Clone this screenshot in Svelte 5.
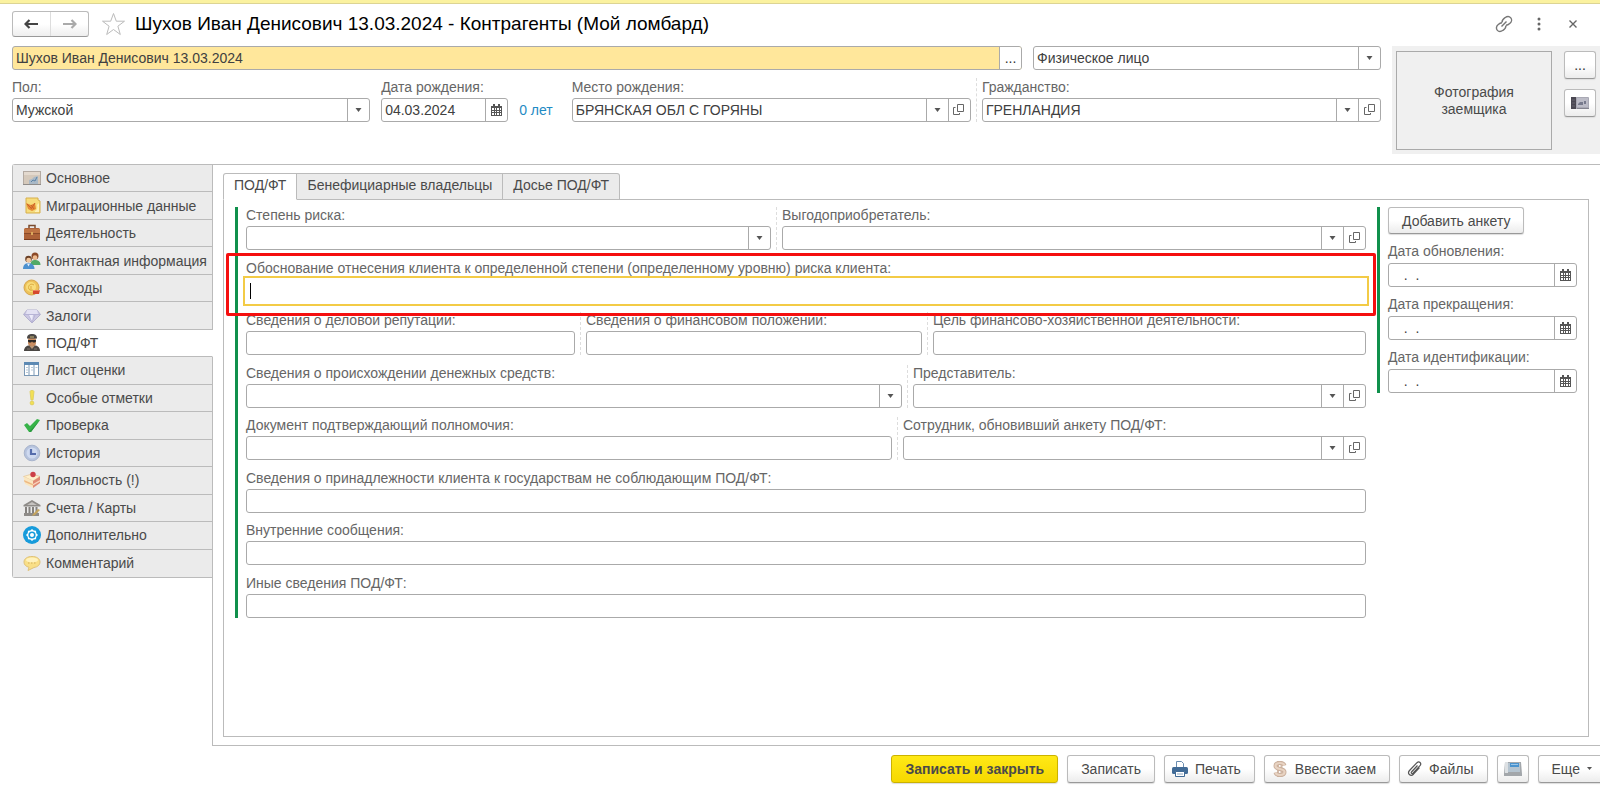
<script>
    const sections = [
        { id: "main", title: "Основное" },
        { id: "migration", title: "Миграционные данные" },
        { id: "work", title: "Деятельность" },
        { id: "contacts", title: "Контактная информация" },
        { id: "expenses", title: "Расходы" },
        { id: "pledges", title: "Залоги" },
        { id: "podft", title: "ПОД/ФТ" },
        { id: "score", title: "Лист оценки" },
        { id: "notes", title: "Особые отметки" },
        { id: "check", title: "Проверка" },
        { id: "history", title: "История" },
        { id: "loyalty", title: "Лояльность (!)" },
        { id: "accounts", title: "Счета / Карты" },
        { id: "extra", title: "Дополнительно" },
        { id: "comment", title: "Комментарий" },
    ];

    const tabs = ["ПОД/ФТ", "Бенефициарные владельцы", "Досье ПОД/ФТ"];

    // share is the relative width of a field inside its row
    const rows = [
        [
            { id: "risk", label: "Степень риска:", kind: "select", share: 525 },
            { id: "beneficiary", label: "Выгодоприобретатель:", kind: "ref", share: 584 },
        ],
        [
            {
                id: "reason",
                label: "Обоснование отнесения клиента к определенной степени (определенному уровню) риска клиента:",
                kind: "focus",
                share: 1,
            },
        ],
        [
            { id: "reputation", label: "Сведения о деловой репутации:", kind: "text", share: 329 },
            { id: "finance", label: "Сведения о финансовом положении:", kind: "text", share: 336 },
            { id: "purpose", label: "Цель финансово-хозяйственной деятельности:", kind: "text", share: 433 },
        ],
        [
            { id: "origin", label: "Сведения о происхождении денежных средств:", kind: "select", share: 656 },
            { id: "agent", label: "Представитель:", kind: "ref", share: 453 },
        ],
        [
            { id: "document", label: "Документ подтверждающий полномочия:", kind: "text", share: 646 },
            { id: "employee", label: "Сотрудник, обновивший анкету ПОД/ФТ:", kind: "ref", share: 463 },
        ],
        [
            {
                id: "states",
                label: "Сведения о принадлежности клиента к государствам не соблюдающим ПОД/ФТ:",
                kind: "text",
                share: 1,
            },
        ],
        [{ id: "messages", label: "Внутренние сообщения:", kind: "text", share: 1 }],
        [{ id: "other", label: "Иные сведения ПОД/ФТ:", kind: "text", share: 1 }],
    ];

    const dates = [
        { id: "updated", label: "Дата обновления:" },
        { id: "stopped", label: "Дата прекращения:" },
        { id: "identified", label: "Дата идентификации:" },
    ];

    let section = $state("podft");
    let tab = $state("ПОД/ФТ");
</script>

{#snippet arrow()}
    <svg width="7" height="4" viewBox="0 0 7 4"><path d="M0.5 0h6L3.5 4z" fill="#555" /></svg>
{/snippet}

{#snippet openIcon()}
    <svg width="12" height="12" viewBox="0 0 12 12" fill="none" stroke="#666">
        <path d="M4.5 0.5h6v7h-6z" />
        <path d="M2.5 3.5h-2v7h6v-1.500" />
    </svg>
{/snippet}

{#snippet calendar()}
    <svg width="11" height="12" viewBox="0 0 11 12">
        <path d="M0 2h11v10H0z" fill="#555" />
        <path d="M2 0h2v3H2zM7 0h2v3H7z" fill="#555" />
        <path
            d="M1 4h2v2H1zM4 4h1v2H4zM6 4h2v2H6zM9 4h1v2H9zM1 7h2v1H1zM4 7h1v1H4zM6 7h2v1H6zM9 7h1v1H9zM1 9h2v2H1zM4 9h1v2H4zM6 9h2v2H6zM9 9h1v2H9z"
            fill="#fff"
        />
    </svg>
{/snippet}

{#snippet control(id, kind, value)}
    <div class="box {kind}">
        {#if kind === "select"}
            <select {id}>
                <option>{value}</option>
            </select>
            <span class="part">{@render arrow()}</span>
        {:else}
            <input {id} type="text" {value} />
        {/if}
        {#if kind === "ref"}
            <button type="button" class="part" aria-label="Выбрать">{@render arrow()}</button>
            <button type="button" class="part" aria-label="Открыть">{@render openIcon()}</button>
        {:else if kind === "date"}
            <button type="button" class="part" aria-label="Календарь">{@render calendar()}</button>
        {:else if kind === "focus"}
            <span class="caret"></span>
        {/if}
    </div>
{/snippet}

{#snippet deviceIcon()}
    <svg width="18" height="14" viewBox="0 0 18 14">
        <rect x="0" y="1" width="18" height="12" rx="1" fill="#a9a9b4" />
        <rect x="0" y="1" width="5" height="12" fill="#4a4852" />
        <path d="M1 4h3M1 7h3M1 10h3" stroke="#66636e" />
        <rect x="6" y="2" width="11" height="9" fill="#bcbcc7" />
        <path d="M7 8l2-2h3v3H7zM13 5h2v3h-2z" fill="#777a8c" />
        <path d="M6 12.500h12" stroke="#84848f" />
    </svg>
{/snippet}

{#snippet sectionIcon(id)}
    <svg width="18" height="18" viewBox="0 0 18 18">
        {#if id === "main"}
            <rect x="0.500" y="2.500" width="17" height="13" fill="#d5c9bb" stroke="#b3aaa2" />
            <path d="M1 3h16v3H1z" fill="#e3d9ce" />
            <path d="M6 15v-4l3-1 2-2 4-1v8z" fill="#a9b9c7" />
            <path d="M8 13l2-2 2 1 2-4" stroke="#5c83a6" fill="none" />
            <path d="M0 15.500h18" stroke="#8f8c8a" />
        {:else if id === "migration"}
            <path d="M3 1h12v2l2 1v12H3z" fill="#f7dd7c" stroke="#d6af4c" />
            <path d="M3 6l5 2 4-2 1 6-4 2-4-2z" fill="#e58b34" />
            <path d="M4 7l4 4M8 8l3 4M12 6l-4 6" stroke="#c9602b" fill="none" />
            <path d="M12 14c2-1 3-3 2-6l2-2v9h-4z" fill="#fff0b5" />
        {:else if id === "work"}
            <path d="M6 4V1.500h6V4" fill="none" stroke="#7b4b2e" stroke-width="1.500" />
            <rect x="1" y="4" width="16" height="12" rx="1.500" fill="#ad6238" />
            <path d="M1 5h16v4.500H1z" fill="#bf7443" />
            <path d="M1 9.500h16" stroke="#8a4a29" />
            <path d="M8 8h2v3H8z" fill="#dca95c" />
            <path d="M1 15h16v1H1z" fill="#7a3d20" />
        {:else if id === "contacts"}
            <circle cx="12" cy="4" r="3.500" fill="#8b4a28" />
            <circle cx="12" cy="5.500" r="2.300" fill="#efbd91" />
            <path d="M7.500 13c0-4 2-5 4.500-5s5.500 1 5.500 5z" fill="#52aa66" />
            <circle cx="5.500" cy="7" r="3.300" fill="#6b4026" />
            <circle cx="5.700" cy="8.200" r="2.400" fill="#f2c69c" />
            <path d="M0 17c0-4 2.500-6 5.500-6s6 2 6 6z" fill="#4d91cf" />
            <path d="M4 11.500l1.500 3 1.500-3z" fill="#e7f0fa" />
        {:else if id === "expenses"}
            <circle cx="8.500" cy="8.500" r="7.500" fill="#edc25a" stroke="#d6a54a" />
            <circle cx="8" cy="8" r="5" fill="#f8dc7b" />
            <path d="M11 6C8 4 5.500 6 5.500 8.500S8 12 10 11M8 7v4" stroke="#dcab40" fill="none" />
            <path d="M10 11h7l-1 4h-6z" fill="#d5482f" />
            <path d="M10 11h7v1h-7z" fill="#ec8062" />
        {:else if id === "pledges"}
            <path d="M4 3h10l3.500 4.500L9 16 0.500 7.500z" fill="#cbc7e2" stroke="#b3b0cf" />
            <path d="M4 3h10l1 4H3z" fill="#e3e1f3" />
            <path d="M1 7.500h16M6 8l3 7 3-7" fill="none" stroke="#b7b4d6" />
            <path d="M6 8h4l-1 6z" fill="#edecfa" />
        {:else if id === "podft"}
            <path d="M1 17c0-4 3-6 8-6s8 2 8 6z" fill="#4a4643" />
            <rect x="5" y="3" width="8" height="9" rx="3" fill="#c98e62" />
            <path d="M4 4.500C4 1 6 0 9 0s5 1 5 4.500z" fill="#4a4745" />
            <path d="M5 6h8v1.500l-1 1h-2L9 7.500l-1 1H6l-1-1z" fill="#2b2826" />
            <path d="M7 3h4" stroke="#c8b675" />
            <path d="M6.500 12L9 15l2.500-3" fill="#b99778" />
            <path d="M4 15h3M11 15h3" stroke="#7b746c" />
        {:else if id === "score"}
            <rect x="1.500" y="1.500" width="14" height="13" fill="#fff" stroke="#7a98b5" />
            <path d="M1 1h15v3H1z" fill="#5d89b3" />
            <path d="M6 4v11M11 4v11" stroke="#7a98b5" />
            <path d="M3 6.500h2M3 9h2M3 11.500h2M8 6.500h2M8 9h2M12.500 6.500h2" stroke="#b9c9d8" />
        {:else if id === "notes"}
            <path d="M7 2.500C7 1 11 1 11 2.500L10 11H8z" fill="#f2e055" stroke="#dccb5a" stroke-width=".8" />
            <circle cx="9" cy="14" r="1.900" fill="#f2e055" stroke="#dccb5a" stroke-width=".8" />
        {:else if id === "check"}
            <path d="M1 9l3-2 3 3 7-7 3 1-9 12H6z" fill="#37b349" />
            <path d="M6 16l1.500-2L17 4l-9 12z" fill="#2b9a3f" />
        {:else if id === "history"}
            <circle cx="9" cy="9" r="7.800" fill="#b6c3dd" stroke="#a9b5cd" />
            <circle cx="9" cy="9" r="5.500" fill="#cfdaf0" />
            <path d="M8 5v5h5" fill="none" stroke="#566dac" stroke-width="2.200" />
        {:else if id === "loyalty"}
            <path d="M0.500 5.500L9 3l8 2.500L10 10z" fill="#fff0cb" stroke="#e2c192" stroke-width=".7" />
            <path d="M0.500 5.500L10 10v7L2 13z" fill="#fae6c0" />
            <path d="M10 10l7-4.500V12l-7 5z" fill="#e08a74" />
            <path d="M1 9l9 4v1.500L1.500 11z" fill="#eeb983" />
            <path d="M10 13l7-4v1.500l-7 4z" fill="#f9d5bd" />
            <circle cx="10" cy="3.500" r="2.700" fill="#cc3f47" />
        {:else if id === "accounts"}
            <path d="M0.500 6L9 1l8.500 5v1.500h-17z" fill="#8e8b88" />
            <path d="M4 6l5-3 5 3z" fill="#c5c2bf" />
            <path d="M1 14h15v3H1z" fill="#8e8b88" />
            <path d="M3 8v6M6.500 8v6M10 8v6M13.500 8v6" stroke="#84817e" stroke-width="2" />
            <path d="M10 15l5-5 2 1-5 5-3 1z" fill="#c5a45c" />
        {:else if id === "extra"}
            <circle cx="9" cy="9" r="9" fill="#179bdb" />
            <path d="M9 3l1.700 1.500L13 4.700l.3 2.500L15 9l-1.700 1.800-.3 2.500-2.300.2L9 15l-1.700-1.500-2.300-.2-.3-2.500L3 9l1.700-1.800.3-2.500 2.300-.2z" fill="#fff" />
            <circle cx="9" cy="9" r="3.600" fill="#179bdb" />
            <circle cx="9" cy="9" r="2" fill="#fff" />
        {:else}
            <path
                d="M9 2.500c4.500 0 8 2 8 5.500 0 3-2.500 5-6 5.500L5 16.500l1-3.200C3 12.500 1 10.800 1 8c0-3.500 3.500-5.500 8-5.500z"
                fill="#f9df87"
                stroke="#dfc27a"
            />
            <ellipse cx="9" cy="6" rx="6" ry="2.500" fill="#fff2bd" />
            <path d="M5 9h1.500M8 9h1.500M11 9h1.500" stroke="#d3ae58" />
        {/if}
    </svg>
{/snippet}

<div class="window">
    <header class="title-bar">
        <div class="nav-buttons">
            <button aria-label="Назад">
                <svg width="15" height="10" viewBox="0 0 15 10"><path d="M14 5H2M5.500 1L1.500 5l4 4" fill="none" stroke="#444" stroke-width="2.200" /></svg>
            </button>
            <button aria-label="Вперед">
                <svg width="15" height="10" viewBox="0 0 15 10"><path d="M1 5h12M9.500 1l4 4-4 4" fill="none" stroke="#aaa" stroke-width="2.200" /></svg>
            </button>
        </div>
        <button class="plain" aria-label="В избранное">
            <svg width="25" height="24" viewBox="0 0 25 24">
                <path d="M12.500 1.500l2.800 7.700h8.200l-6.600 5 2.400 8.300-6.800-5-6.800 5 2.400-8.300-6.600-5h8.200z" fill="#fff" stroke="#bbb" />
            </svg>
        </button>
        <h1>Шухов Иван Денисович 13.03.2024 - Контрагенты (Мой ломбард)</h1>
        <div class="window-tools">
            <button class="plain" aria-label="Ссылка">
                <svg width="18" height="18" viewBox="0 0 18 18" fill="none" stroke="#777" stroke-width="1.400">
                    <path d="M7 7.500C7 5.500 8 4 10 2.700c2-1.500 4.500-1.400 5.800.2s.8 4-.8 5.300c-1.300 1.200-2.500 2-4 2" />
                    <path d="M11 10.500c0 2-1 3.500-3 4.800-2 1.500-4.500 1.400-5.800-.2s-.8-4 .8-5.300c1.300-1.200 2.500-2 4-2" />
                    <path d="M6.500 11.500l5-5" />
                </svg>
            </button>
            <button class="plain" aria-label="Меню">
                <svg width="4" height="14" viewBox="0 0 4 14" fill="#666"><circle cx="2" cy="2" r="1.500" /><circle cx="2" cy="7" r="1.500" /><circle cx="2" cy="12" r="1.500" /></svg>
            </button>
            <button class="plain" aria-label="Закрыть">
                <svg width="8" height="8" viewBox="0 0 8 8"><path d="M.5.5l7 7M7.500.5l-7 7" stroke="#666" stroke-width="1.400" /></svg>
            </button>
        </div>
    </header>

    <div class="person">
        <div class="person-fields">
            <div class="line">
                <div class="box name">
                    <input type="text" aria-label="Наименование" value="Шухов Иван Денисович 13.03.2024" />
                    <button class="part dots">...</button>
                </div>
                <div class="box select person-type">
                    <select aria-label="Вид контрагента"><option>Физическое лицо</option></select>
                    <span class="part">{@render arrow()}</span>
                </div>
            </div>
            <div class="line details">
                <div class="field sex">
                    <label for="sex">Пол:</label>
                    {@render control("sex", "select", "Мужской")}
                </div>
                <div class="field birthday">
                    <label for="birthday">Дата рождения:</label>
                    {@render control("birthday", "date", "04.03.2024")}
                </div>
                <a class="age" href="#age">0 лет</a>
                <div class="field place">
                    <label for="birthplace">Место рождения:</label>
                    {@render control("birthplace", "ref", "БРЯНСКАЯ ОБЛ С ГОРЯНЫ")}
                </div>
                <div class="field place divided">
                    <label for="citizenship">Гражданство:</label>
                    {@render control("citizenship", "ref", "ГРЕНЛАНДИЯ")}
                </div>
            </div>
        </div>
        <div class="photo">
            <div class="photo-frame">Фотография заемщика</div>
            <div class="photo-buttons">
                <button class="btn dots">...</button>
                <button class="btn" aria-label="Камера">{@render deviceIcon()}</button>
            </div>
        </div>
    </div>

    <main>
        <nav>
            {#each sections as item}
                <button class:active={section === item.id} onclick={() => (section = item.id)}>
                    {@render sectionIcon(item.id)}
                    {item.title}
                </button>
            {/each}
        </nav>
        <div class="page">
            <div class="tabs">
                {#each tabs as name}
                    <button class:active={tab === name} onclick={() => (tab = name)}>{name}</button>
                {/each}
            </div>
            <div class="panel">
                <form class="questionnaire">
                    {#each rows as row}
                        <div class="row" class:marked={row[0].kind === "focus"}>
                            {#each row as field, i}
                                <div class="field" class:divided={i > 0} style="flex-grow: {field.share}">
                                    <label for={field.id}>{field.label}</label>
                                    {@render control(field.id, field.kind, "")}
                                </div>
                            {/each}
                        </div>
                    {/each}
                </form>
                <aside>
                    <button class="btn add">Добавить анкету</button>
                    {#each dates as date}
                        <div class="field">
                            <label for={date.id}>{date.label}</label>
                            {@render control(date.id, "date", "  .  .")}
                        </div>
                    {/each}
                </aside>
            </div>
        </div>
    </main>

    <footer>
        <button class="btn primary">Записать и закрыть</button>
        <button class="btn">Записать</button>
        <button class="btn with-icon">
            <svg width="16" height="16" viewBox="0 0 16 16">
                <path d="M4.500 7V.5h5l2 2V7" fill="#fff" stroke="#6a8db0" />
                <rect x="0" y="6" width="16" height="7" rx="1.500" fill="#416b96" />
                <path d="M3.500 10.500h9v5h-9z" fill="#fff" stroke="#416b96" />
                <path d="M5 13h6" stroke="#8aa5bf" />
            </svg>
            Печать
        </button>
        <button class="btn with-icon">
            <svg width="16" height="18" viewBox="0 0 16 18" fill="none">
                <path d="M6 1v16M9.500 1v16" stroke="#d3bba9" stroke-width="2" />
                <path d="M12.500 5.500C12 3.800 10.500 3 8 3S3.500 4 3.500 6s2 2.500 4.500 3 4.500 1 4.500 3-1.500 3-4.500 3-4-.7-4.500-2.500" stroke="#c9ae9b" stroke-width="4" />
                <path d="M12.500 5.500C12 3.800 10.500 3 8 3S3.500 4 3.500 6s2 2.500 4.500 3 4.500 1 4.500 3-1.500 3-4.500 3-4-.7-4.500-2.500" stroke="#e8d3c2" stroke-width="2.200" />
            </svg>
            Ввести заем
        </button>
        <button class="btn with-icon">
            <svg width="15" height="16" viewBox="0 0 15 16" fill="none" stroke="#555" stroke-width="1.200">
                <path d="M10.500 4.500l-6 6.500c-.8 1 .5 2.200 1.500 1.200l7-7.500c2-2.400-.8-5-3-3L2.500 9.500c-2.600 3 1 6.500 4 3.700l6-6.500" />
            </svg>
            Файлы
        </button>
        <button class="btn square" aria-label="Журнал">
            <svg width="18" height="14" viewBox="0 0 18 14">
                <path d="M1 0h16l1 12v2H0v-2z" fill="#a3a7ab" />
                <path d="M1 0h3v11H1z" fill="#dce0e3" />
                <path d="M4 1h12v9H4z" fill="#b5c4d0" />
                <path d="M6 1h9v4H6z" fill="#4b94cf" />
                <path d="M7 2.500h7" stroke="#9cc6e8" />
            </svg>
        </button>
        <button class="btn more">Еще <svg width="5" height="4" viewBox="0 0 5 4"><path d="M0 0h5L2.500 3z" fill="#555" /></svg></button>
    </footer>
</div>

<style>
    :global(body) {
        margin: 0;
        background: #fff;
    }

    .window,
    .window * {
        box-sizing: border-box;
    }

    .window {
        min-height: 100vh;
        display: flex;
        flex-direction: column;
        overflow: hidden;
        border-top: 3px solid #fbf2a0;
        background: #fff;
        color: #4a4a4a;
        font-family: "Liberation Sans", Arial, sans-serif;
        font-size: 14px;
    }

    button,
    input,
    select {
        font: inherit;
        color: inherit;
    }

    button {
        display: flex;
        align-items: center;
        justify-content: center;
        margin: 0;
        padding: 0;
        border: 0;
        background: none;
        white-space: nowrap;
        cursor: pointer;
    }

    svg {
        flex: none;
    }

    /* Title bar */
    .title-bar {
        display: flex;
        align-items: center;
        height: 43px;
        padding: 0 23px 2px 12px;
        border-top: 1px solid #dcd494;
    }

    .nav-buttons {
        display: flex;
        width: 77px;
        height: 26px;
        border: 1px solid #bbb;
        border-bottom-color: #999;
        border-radius: 3px;
        background: linear-gradient(#fff 50%, #eee);
    }

    .nav-buttons button {
        flex: 1;
    }

    .nav-buttons button + button {
        border-left: 1px solid #ddd;
    }

    .title-bar > .plain {
        margin-left: 12px;
    }

    h1 {
        flex: 1;
        margin: 0 0 0 9px;
        color: #000;
        font-size: 19px;
        font-weight: 400;
    }

    .window-tools {
        display: flex;
        align-items: center;
        gap: 24px;
    }

    .window-tools .plain:last-child {
        padding-left: 4px;
    }

    /* Person header */
    .person {
        display: flex;
        height: 108px;
        margin-left: 12px;
    }

    .person-fields {
        flex: 1;
        margin-right: 11px;
    }

    .line {
        display: flex;
    }

    .details {
        align-items: flex-end;
        margin-top: 8px;
    }

    .field {
        display: flex;
        flex-direction: column;
        min-width: 0;
    }

    label {
        height: 19px;
        line-height: 17px;
        color: #666;
        white-space: nowrap;
    }

    .box {
        position: relative;
        display: flex;
        height: 24px;
        border: 1px solid #aaa;
        border-radius: 3px;
        background: #fff;
        color: #404040;
    }

    .box input,
    .box select {
        flex: 1;
        width: 0;
        min-width: 0;
        padding: 0 3px;
        border: 0;
        outline: 0;
        background: transparent;
        appearance: none;
    }

    .part {
        display: flex;
        align-items: center;
        justify-content: center;
        width: 22px;
        border-left: 1px solid #aaa;
    }

    .select .part {
        pointer-events: none;
    }

    .name {
        flex: 1011;
        overflow: hidden;
        background: #ffe79b;
    }

    .name .part {
        background: #fff;
    }

    .person-type {
        flex: 347;
        margin-left: 11px;
    }

    .details label {
        height: 20px;
        line-height: 19px;
    }

    .sex {
        flex: 358;
    }

    .birthday {
        flex: 127;
        margin-left: 11px;
    }

    .age {
        padding: 0 19px 0 11px;
        color: #1f8bc4;
        line-height: 24px;
        text-decoration: none;
        white-space: nowrap;
    }

    .place {
        flex: 399;
    }

    .divided {
        margin-left: 5px;
        padding-left: 5px;
        border-left: 1px dashed #ddd;
    }

    .photo {
        display: flex;
        width: 208px;
        padding: 5px 4px 4px;
        background: #f0f0f0;
    }

    .photo-frame {
        display: flex;
        align-items: center;
        justify-content: center;
        flex: 1;
        padding: 0 30px;
        border: 1px solid #aaa;
        line-height: 17px;
        text-align: center;
    }

    .photo-buttons {
        display: flex;
        flex-direction: column;
        gap: 10px;
        margin-left: 12px;
    }

    .btn {
        height: 28px;
        padding: 0 13px;
        border: 1px solid #bbb;
        border-bottom-color: #999;
        border-radius: 3px;
        background: linear-gradient(#fff 50%, #ececec);
        box-shadow: 0 1px 1px #ddd;
    }

    .photo-buttons .btn {
        width: 32px;
        padding: 0;
    }

    .dots {
        color: #333;
    }

    /* Sections and tabs */
    main {
        flex: 1;
        display: flex;
        align-items: flex-start;
        margin: 10px 0 0 12px;
    }

    nav {
        position: relative;
        display: grid;
        grid-auto-rows: 1fr;
        width: 201px;
        min-height: 414px;
        border: 1px solid #bbb;
        border-right: 0;
        border-radius: 3px 0 0 3px;
    }

    nav button {
        justify-content: flex-start;
        gap: 5px;
        padding-left: 10px;
        border-right: 1px solid #bbb;
        border-bottom: 1px solid #bbb;
        background: #ebebeb;
    }

    nav button:last-child {
        border-bottom: 0;
    }

    nav .active {
        border-right-color: #fff;
        background: #fff;
    }

    .page {
        flex: 1;
        align-self: stretch;
        display: flex;
        flex-direction: column;
        min-width: 0;
        margin-left: -1px;
        padding: 8px 11px 8px 10px;
        border: solid #bbb;
        border-width: 1px 0 1px 1px;
    }

    .tabs {
        display: flex;
    }

    .tabs button {
        height: 27px;
        padding: 0 10px 3px;
        border: 1px solid #bbb;
        border-left-width: 0;
        background: #ebebeb;
    }

    .tabs button:first-child {
        border-left-width: 1px;
        border-top-left-radius: 3px;
    }

    .tabs button:last-child {
        border-top-right-radius: 3px;
    }

    .tabs .active {
        position: relative;
        border-bottom-color: #fff;
        background: #fff;
    }

    .panel {
        flex: 1;
        display: flex;
        align-items: flex-start;
        gap: 11px;
        margin-top: -1px;
        padding: 7px 11px;
        border: 1px solid #bbb;
    }

    .questionnaire {
        flex: 1;
        display: flex;
        flex-direction: column;
        justify-content: space-between;
        min-width: 0;
        min-height: 411px;
        padding-left: 8px;
        border-left: 3px solid #10904c;
    }

    .row {
        position: relative;
        display: flex;
    }

    .row .field {
        flex: 1 1 0;
    }

    /* Red frame around the row the user has to fill in */
    .marked::after {
        content: "";
        position: absolute;
        inset: -7px -10px -13px -20px;
        z-index: 1;
        border: 3px solid #f50f0f;
        border-radius: 2px;
        pointer-events: none;
    }

    .focus {
        outline: 2px solid #f3cb46;
        outline-offset: 1px;
        border-color: #fff;
        border-radius: 0;
    }

    .caret {
        position: absolute;
        left: 3px;
        top: 3px;
        width: 1px;
        height: 16px;
        background: #000;
    }

    aside {
        display: flex;
        flex-direction: column;
        gap: 9px;
        width: 200px;
        padding-left: 8px;
        border-left: 3px solid #10904c;
    }

    aside label {
        height: 20px;
    }

    aside .add {
        align-self: flex-start;
        height: 27px;
    }

    aside input {
        white-space: pre;
        text-indent: 4px;
    }

    /* Bottom commands */
    footer {
        display: flex;
        justify-content: flex-end;
        gap: 9px;
        margin-right: -6px;
        padding: 9px 0 7px;
    }

    .primary {
        border-color: #cbb200;
        background: linear-gradient(#ffe916, #f6d800);
        font-weight: 700;
    }

    .with-icon {
        gap: 7px;
        padding-left: 7px;
    }

    .square {
        padding: 0 6px;
    }

    .more {
        gap: 7px;
    }
</style>
